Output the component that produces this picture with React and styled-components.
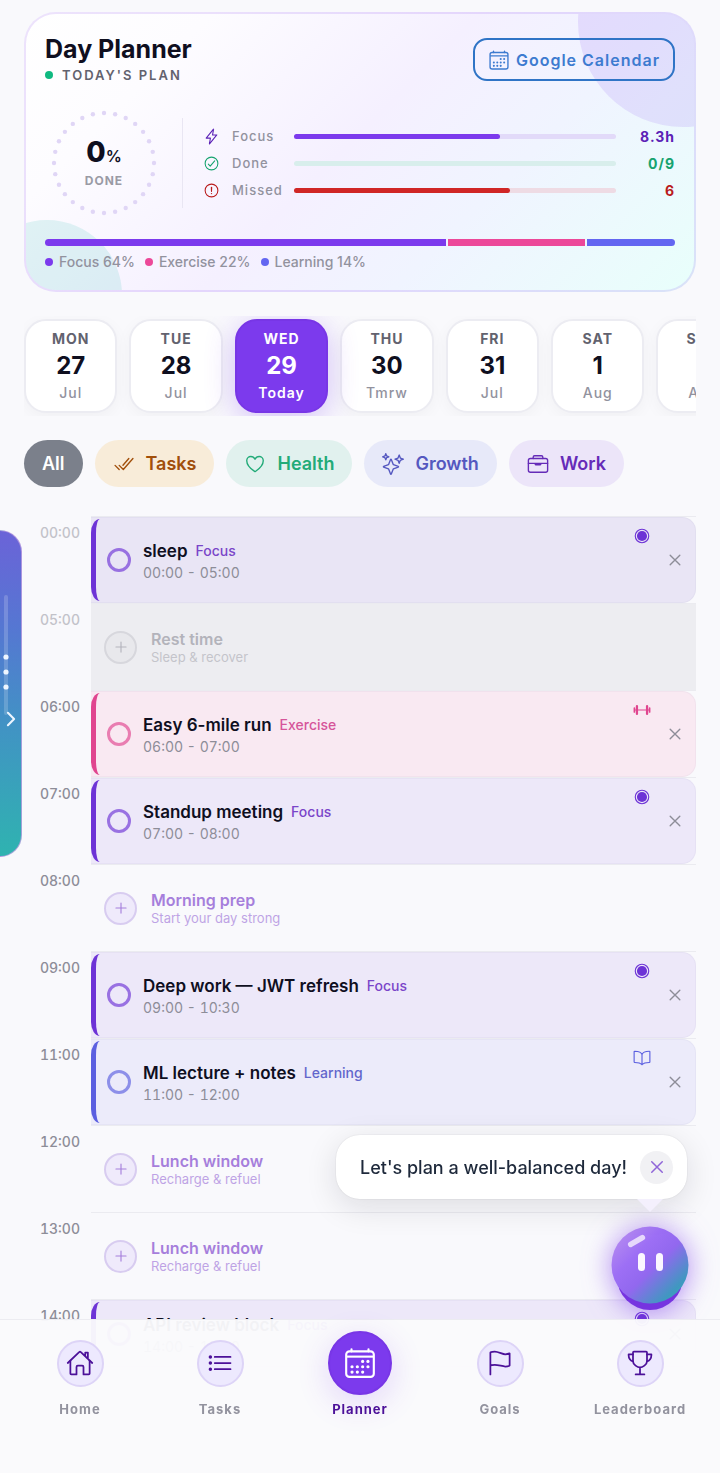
import React, { useState } from "react";
import styled, { createGlobalStyle, css } from "styled-components";
import {
  IoAddOutline,
  IoAlertCircleOutline,
  IoBarbellOutline,
  IoBookOutline,
  IoBriefcaseOutline,
  IoCalendarOutline,
  IoCheckmarkCircleOutline,
  IoCheckmarkDoneOutline,
  IoChevronForward,
  IoCloseOutline,
  IoFlagOutline,
  IoFlashOutline,
  IoHeartOutline,
  IoHomeOutline,
  IoListOutline,
  IoRadioButtonOn,
  IoSparklesOutline,
  IoTrophyOutline,
} from "react-icons/io5";

const GlobalStyle = createGlobalStyle`
  * {
    box-sizing: border-box;
  }
  body {
    margin: 0;
    background: #f9f9fc;
    color: #0f0f1f;
    font-family: Inter, "Liberation Sans", sans-serif;
  }
  button {
    font-family: inherit;
    cursor: pointer;
  }
`;

const Page = styled.main`
  padding: 12px 24px 80px;
`;

/* ---------- summary card ---------- */

const Summary = styled.section`
  position: relative;
  overflow: hidden;
  height: 280px;
  padding: 19px;
  border: 2px solid rgba(124, 58, 237, 0.14);
  border-radius: 32px;
  background: linear-gradient(135deg, #ffffff 0%, #fdfcff 20%, #f5f0ff 48%, #f0f4ff 68%, #e8fffb 100%) border-box;
`;

const Blob = styled.span`
  position: absolute;
  border-radius: 50%;
`;

const PurpleBlob = styled(Blob)`
  top: -97px;
  right: -94px;
  width: 210px;
  height: 210px;
  background: rgba(124, 58, 237, 0.12);
`;

const TealBlob = styled(Blob)`
  left: -54px;
  bottom: -80px;
  width: 150px;
  height: 150px;
  background: rgba(20, 184, 166, 0.12);
`;

const SummaryBody = styled.div`
  position: relative;
`;

const SummaryHeader = styled.header`
  display: flex;
  justify-content: space-between;
  align-items: flex-start;
  height: 71px;
  padding-top: 5px;
`;

const Title = styled.h1`
  margin: 0;
  font-size: 25px;
  line-height: 22px;
  font-weight: 700;
`;

const Subtitle = styled.p`
  display: flex;
  align-items: center;
  gap: 9px;
  margin: 7px 0 0;
  font-size: 13px;
  line-height: 16px;
  font-weight: 600;
  letter-spacing: 2px;
  color: #62626e;
`;

const Dot = styled.span`
  width: 8px;
  height: 8px;
  border-radius: 50%;
  background: ${({ $color }) => $color};
`;

const GoogleButton = styled.button`
  display: flex;
  align-items: center;
  gap: 6px;
  height: 43px;
  padding: 0 13px;
  border: 2px solid #2f74c6;
  border-radius: 14px;
  background: transparent;
  color: #3d7bd0;
  font-size: 16px;
  font-weight: 600;
  letter-spacing: 1px;
`;

const Stats = styled.div`
  display: flex;
  align-items: center;
  height: 118px;
`;

const Ring = styled.div`
  display: grid;
  place-items: center;
  width: 118px;
  height: 118px;

  > * {
    grid-area: 1 / 1;
  }
`;

const RingText = styled.div`
  text-align: center;
`;

const RingValue = styled.div`
  font-size: 28px;
  line-height: 32px;
  font-weight: 800;

  small {
    font-size: 16px;
    font-weight: 600;
  }
`;

const RingLabel = styled.div`
  font-size: 12px;
  line-height: 18px;
  font-weight: 700;
  letter-spacing: 1px;
  color: #9a9aa5;
`;

const StatList = styled.div`
  flex: 1;
  display: grid;
  gap: 7px;
  margin-left: 19px;
  padding: 8px 0 8px 20px;
  border-left: 1px solid #e9e6f3;
`;

const StatRow = styled.div`
  display: grid;
  grid-template-columns: 17px 50px 1fr 47px;
  column-gap: 12px;
  align-items: center;
  height: 20px;
  font-size: 14px;
  color: ${({ $color }) => $color};

  svg {
    width: 17px;
    height: 17px;
  }
`;

const StatLabel = styled.span`
  font-size: 13px;
  font-weight: 500;
  letter-spacing: 1px;
  color: #92929e;
`;

const StatValue = styled.strong`
  text-align: right;
  font-weight: 700;
  letter-spacing: 1px;
`;

const Track = styled.div`
  height: 5px;
  border-radius: 3px;
  background: ${({ $color }) => $color};
`;

const Fill = styled.div`
  height: 5px;
  border-radius: 3px;
  background: ${({ $color }) => $color};
`;

const SplitBar = styled.div`
  display: flex;
  gap: 2px;
  overflow: hidden;
  height: 7px;
  margin-top: 17px;
  border-radius: 4px;
`;

const SplitPart = styled.span`
  flex: ${({ $share }) => $share};
  background: ${({ $color }) => $color};
`;

const Legend = styled.ul`
  display: flex;
  gap: 10px;
  margin: 8px 0 0;
  padding: 0;
  list-style: none;
`;

const LegendItem = styled.li`
  display: flex;
  align-items: center;
  gap: 6px;
  font-size: 14px;
  line-height: 16px;
  font-weight: 500;
  color: #92929e;
`;

/* ---------- day strip ---------- */

const DayStrip = styled.div`
  display: flex;
  gap: 12px;
  overflow: hidden;
  margin-top: 24px;
  padding: 3px 0;
`;

const Day = styled.button`
  flex: 0 0 13.9%;
  height: 94px;
  padding: 0;
  border: 2px solid #ececf2;
  border-radius: 22px;
  background: #ffffff;
  box-shadow: 0 4px 16px rgba(15, 15, 31, 0.04);
  color: #0f0f1f;

  span {
    display: block;
    font-size: 14px;
    line-height: 24px;
    letter-spacing: 1px;
    font-weight: 500;
    color: #92929e;
  }
  span:first-child {
    font-weight: 700;
    color: #62626e;
  }
  strong {
    display: block;
    font-size: 24px;
    line-height: 30px;
    font-weight: 700;
  }

  ${({ $active }) =>
    $active &&
    css`
      position: relative;
      border-color: #7836e6;
      background: #7c3aed;
      box-shadow: 0 6px 30px rgba(124, 58, 237, 0.3);
      color: #ffffff;

      span,
      span:first-child {
        color: #ffffff;
      }
      span:last-child {
        font-weight: 600;
      }
    `}
`;

/* ---------- filters ---------- */

const Filters = styled.div`
  display: flex;
  gap: 12px;
  margin-top: 24px;
`;

const Filter = styled.button`
  display: flex;
  align-items: center;
  gap: 11px;
  height: 47px;
  padding: 0 18px;
  border: 0;
  border-radius: 24px;
  background: ${({ $bg }) => $bg};
  color: ${({ $color }) => $color};
  font-size: 18px;
  font-weight: 600;

  svg {
    width: 22px;
    height: 22px;
  }
`;

/* ---------- timeline ---------- */

const Timeline = styled.section`
  margin-top: 29px;
`;

const Row = styled.div`
  display: grid;
  grid-template-columns: 67px 1fr;
  height: ${({ $short }) => ($short ? "68px" : "87px")};
`;

const Hour = styled.time`
  padding: 9px 11px 0 0;
  text-align: right;
  font-size: 14px;
  line-height: 16px;
  font-weight: 500;
  font-variant-numeric: tabular-nums;
  color: #8d8d98;
  opacity: ${({ $faded }) => ($faded ? 0.5 : 1)};
`;

const Slot = styled.div`
  border-top: 1px solid #ebebf0;
`;

const Task = styled.article`
  position: relative;
  display: flex;
  align-items: center;
  height: 100%;
  padding-left: 16px;
  border: 1px solid rgba(80, 70, 130, 0.04);
  border-left: 0;
  border-radius: 0 14px 14px 0;
  background: ${({ $bg }) => $bg};

  &::before {
    content: "";
    position: absolute;
    top: 1px;
    bottom: 1px;
    left: 0;
    width: 9px;
    border-left: 5px solid ${({ $color }) => $color};
    border-radius: 9px 0 0 9px / 14px 0 0 14px;
  }
`;

const Check = styled.input`
  appearance: none;
  width: 24px;
  height: 24px;
  margin: 0 12px 0 0;
  border: 3px solid ${({ $color }) => $color};
  border-radius: 50%;
  opacity: 0.66;
`;

const SlotText = styled.div`
  padding-top: 2px;
`;

const TaskName = styled.label`
  display: flex;
  align-items: center;
  gap: 8px;
  font-size: 17px;
  line-height: 24px;
  font-weight: 600;
`;

const Tag = styled.span`
  font-size: 14px;
  font-weight: 500;
  color: ${({ $color }) => $color};
`;

const TaskTime = styled.div`
  font-size: 14px;
  line-height: 20px;
  font-variant-numeric: tabular-nums;
  color: #8d8d98;
`;

const TaskIcon = styled.span`
  position: absolute;
  top: 9px;
  right: 44px;
  display: flex;
  color: ${({ $color }) => $color};
  font-size: 18px;
`;

const RemoveButton = styled.button`
  display: flex;
  margin-left: auto;
  margin-right: 9px;
  padding: 0;
  border: 0;
  background: none;
  color: #8d8d98;
  font-size: 22px;
`;

const Empty = styled.div`
  display: flex;
  align-items: center;
  gap: 14px;
  height: 100%;
  padding-left: 13px;
  background: ${({ $rest }) => ($rest ? "#ededf1" : "transparent")};
  color: ${({ $rest }) => ($rest ? "#8d8d98" : "#7434c9")};

  > * {
    opacity: ${({ $rest }) => ($rest ? 0.6 : 0.62)};
  }
`;

const AddButton = styled.button`
  display: grid;
  place-items: center;
  width: 33px;
  height: 33px;
  padding: 0;
  border: 2px solid ${({ $rest }) => ($rest ? "#c9c9d0" : "#c5b2ea")};
  border-radius: 50%;
  background: ${({ $rest }) => ($rest ? "#e6e6ea" : "#e9e1fb")};
  color: inherit;
  font-size: 18px;
`;

const EmptyTitle = styled.div`
  font-size: 16px;
  line-height: 18px;
  font-weight: 600;
`;

const EmptyHint = styled.div`
  font-size: 13px;
  line-height: 18px;
  opacity: 0.7;
`;

/* ---------- floating parts ---------- */

const DrawerHandle = styled.button`
  position: fixed;
  left: 0;
  top: 530px;
  display: grid;
  width: 22px;
  height: 327px;
  padding: 0;
  border: 1px solid rgba(190, 160, 225, 0.8);
  border-left: 0;
  border-radius: 0 24px 24px 0;
  background: linear-gradient(180deg, #6b63d8 0%, #5577d2 30%, #4193c4 60%, #2fb3b0 100%);
`;

const Bubble = styled.aside`
  position: fixed;
  right: 33px;
  bottom: 274px;
  display: flex;
  align-items: center;
  gap: 13px;
  height: 64px;
  padding: 0 14px 0 24px;
  border-radius: 24px;
  background: #ffffff;
  box-shadow: 0 8px 32px rgba(15, 15, 31, 0.12), 0 0 2px rgba(15, 15, 31, 0.12);
  color: #1e293b;
  font-size: 18px;
  font-weight: 500;

  &::after {
    content: "";
    position: absolute;
    right: 24px;
    top: 100%;
    border: 13px solid transparent;
    border-top-color: #f4f0fd;
    border-bottom: 0;
  }
`;

const BubbleClose = styled.button`
  display: grid;
  place-items: center;
  width: 33px;
  height: 33px;
  padding: 0;
  border: 0;
  border-radius: 50%;
  background: #f1f1f4;
  color: #9066d8;
  font-size: 24px;
`;

const Mascot = styled.button`
  position: fixed;
  right: 31px;
  bottom: 163px;
  display: flex;
  padding: 0;
  border: 0;
  background: none;

  svg {
    overflow: visible;
    filter: drop-shadow(0 2px 14px rgba(124, 58, 237, 0.6));
  }
`;

/* ---------- bottom nav ---------- */

const Nav = styled.nav`
  position: fixed;
  left: 0;
  right: 0;
  bottom: 0;
  display: grid;
  grid-template-columns: repeat(5, 1fr);
  height: 154px;
  padding: 11px 10px;
  border-top: 1px solid #ececf1;
  background: rgba(250, 250, 252, 0.97);
`;

const NavItem = styled.a`
  display: flex;
  flex-direction: column;
  align-items: center;
  gap: 5px;
  color: ${({ $active }) => ($active ? "#4c1199" : "#92929e")};
  font-size: 13px;
  line-height: 18px;
  font-weight: 700;
  letter-spacing: 1px;
  text-decoration: none;
`;

const NavSlot = styled.span`
  display: grid;
  place-items: center;
  height: 64px;
`;

const NavIcon = styled.span`
  display: grid;
  place-items: center;
  width: 47px;
  height: 47px;
  border: 2px solid #ddd4f7;
  border-radius: 50%;
  background: #ede9fe;
  color: #4c1199;
  font-size: 28px;

  ${({ $active }) =>
    $active &&
    css`
      width: 64px;
      height: 64px;
      border-color: #7836e6;
      background: #7c3aed;
      box-shadow: 0 8px 32px rgba(124, 58, 237, 0.2);
      color: #ffffff;
      font-size: 34px;
    `}
`;

const PURPLE = "#7c3aed";
const PINK = "#ec4899";
const BLUE = "#6366f1";

const stats = [
  { label: "Focus", value: "8.3h", percent: 64, color: "#5b21b6", bar: PURPLE, track: "#e2daf9", Icon: IoFlashOutline },
  { label: "Done", value: "0/9", percent: 0, color: "#16a36f", bar: "#10b981", track: "#d8eeec", Icon: IoCheckmarkCircleOutline },
  { label: "Missed", value: "6", percent: 67, color: "#b91c1c", bar: "#d02626", track: "#eedbe4", Icon: IoAlertCircleOutline },
];

const split = [
  { label: "Focus", share: 64, color: PURPLE },
  { label: "Exercise", share: 22, color: PINK },
  { label: "Learning", share: 14, color: BLUE },
];

const days = [
  { name: "MON", date: 27, note: "Jul" },
  { name: "TUE", date: 28, note: "Jul" },
  { name: "WED", date: 29, note: "Today" },
  { name: "THU", date: 30, note: "Tmrw" },
  { name: "FRI", date: 31, note: "Jul" },
  { name: "SAT", date: 1, note: "Aug" },
  { name: "SUN", date: 2, note: "Aug" },
];

const filters = [
  { label: "All", bg: "#7b808b", color: "#ffffff" },
  { label: "Tasks", bg: "#f8ecd9", color: "#a14f0b", Icon: IoCheckmarkDoneOutline },
  { label: "Health", bg: "#e1f1ee", color: "#22ab78", Icon: IoHeartOutline },
  { label: "Growth", bg: "#e7e9f9", color: "#5558c0", Icon: IoSparklesOutline },
  { label: "Work", bg: "#ece5f9", color: "#652bb8", Icon: IoBriefcaseOutline },
];

const kinds = {
  Focus: { color: "#6d33d6", tag: "#7a45c9", bg: "#ede8f9", Icon: IoRadioButtonOn },
  Exercise: { color: "#e0458f", tag: "#d6559a", bg: "#f9e9f2", Icon: IoBarbellOutline },
  Learning: { color: "#5b5fe0", tag: "#6266cc", bg: "#ecebfa", Icon: IoBookOutline },
};

const slots = [
  { hour: "00:00", title: "sleep", kind: "Focus", time: "00:00 - 05:00", faded: true },
  { hour: "05:00", title: "Rest time", hint: "Sleep & recover", rest: true, faded: true },
  { hour: "06:00", title: "Easy 6-mile run", kind: "Exercise", time: "06:00 - 07:00" },
  { hour: "07:00", title: "Standup meeting", kind: "Focus", time: "07:00 - 08:00" },
  { hour: "08:00", title: "Morning prep", hint: "Start your day strong" },
  { hour: "09:00", title: "Deep work — JWT refresh", kind: "Focus", time: "09:00 - 10:30" },
  { hour: "11:00", title: "ML lecture + notes", kind: "Learning", time: "11:00 - 12:00" },
  { hour: "12:00", title: "Lunch window", hint: "Recharge & refuel" },
  { hour: "13:00", title: "Lunch window", hint: "Recharge & refuel" },
  { hour: "14:00", title: "API review block", kind: "Focus", time: "14:00 - 15:30", short: true },
];

const links = [
  { label: "Home", Icon: IoHomeOutline },
  { label: "Tasks", Icon: IoListOutline },
  { label: "Planner", Icon: IoCalendarOutline },
  { label: "Goals", Icon: IoFlagOutline },
  { label: "Leaderboard", Icon: IoTrophyOutline },
];

const ringDots = Array.from({ length: 28 }, (_, i) => (i * 2 * Math.PI) / 28);

function DayRing() {
  return (
    <Ring>
      <svg width="118" height="118" viewBox="0 0 118 118" aria-hidden="true">
        {ringDots.map((angle) => (
          <circle
            key={angle}
            cx={59 + 50 * Math.cos(angle)}
            cy={59 + 50 * Math.sin(angle)}
            r="2.2"
            fill="#e0d6f6"
          />
        ))}
      </svg>
      <RingText>
        <RingValue>
          0<small>%</small>
        </RingValue>
        <RingLabel>DONE</RingLabel>
      </RingText>
    </Ring>
  );
}

function TaskSlot({ slot }) {
  const { color, tag, bg, Icon } = kinds[slot.kind];
  const id = `task-${slot.hour}`;
  return (
    <Task $color={color} $bg={slot.faded ? "#e9e5f5" : bg}>
      <Check type="checkbox" id={id} $color={color} />
      <SlotText>
        <TaskName htmlFor={id}>
          {slot.title} <Tag $color={tag}>{slot.kind}</Tag>
        </TaskName>
        <TaskTime>{slot.time}</TaskTime>
      </SlotText>
      <TaskIcon $color={color}>
        <Icon />
      </TaskIcon>
      <RemoveButton aria-label={`Remove ${slot.title}`}>
        <IoCloseOutline />
      </RemoveButton>
    </Task>
  );
}

function EmptySlot({ slot }) {
  return (
    <Empty $rest={slot.rest}>
      <AddButton $rest={slot.rest} aria-label={`Add at ${slot.hour}`}>
        <IoAddOutline />
      </AddButton>
      <SlotText>
        <EmptyTitle>{slot.title}</EmptyTitle>
        <EmptyHint>{slot.hint}</EmptyHint>
      </SlotText>
    </Empty>
  );
}

function MascotFace() {
  return (
    <svg width="78" height="84" viewBox="0 0 78 84" aria-hidden="true">
      <defs>
        <linearGradient id="face" x1="0.1" y1="0.1" x2="0.9" y2="0.9">
          <stop offset="0" stopColor="#b48af0" />
          <stop offset="0.3" stopColor="#9d6ff5" />
          <stop offset="0.55" stopColor="#9268ef" />
          <stop offset="0.9" stopColor="#3f98c0" />
          <stop offset="1" stopColor="#38a8b8" />
        </linearGradient>
      </defs>
      <circle cx="39" cy="51" r="33" fill="#7634e0" />
      <circle cx="39" cy="39" r="38.5" fill="url(#face)" />
      <rect x="16" y="12.5" width="19" height="5.5" rx="2.75" fill="#e6d8fb" transform="rotate(-30 25 15)" />
      <rect x="27" y="27" width="7" height="18" rx="3.5" fill="#fbf7ff" />
      <rect x="45" y="27" width="7" height="18" rx="3.5" fill="#fbf7ff" />
    </svg>
  );
}

function App() {
  const [day, setDay] = useState("WED");
  const [showTip, setShowTip] = useState(true);

  return (
    <>
      <GlobalStyle />
      <Page>
        <Summary>
          <PurpleBlob />
          <TealBlob />
          <SummaryBody>
            <SummaryHeader>
              <div>
                <Title>Day Planner</Title>
                <Subtitle>
                  <Dot $color="#10b981" />
                  TODAY'S PLAN
                </Subtitle>
              </div>
              <GoogleButton>
                <IoCalendarOutline size={22} />
                Google Calendar
              </GoogleButton>
            </SummaryHeader>
            <Stats>
              <DayRing />
              <StatList>
                {stats.map(({ label, value, percent, color, bar, track, Icon }) => (
                  <StatRow key={label} $color={color}>
                    <Icon />
                    <StatLabel>{label}</StatLabel>
                    <Track $color={track}>
                      <Fill $color={bar} style={{ width: `${percent}%` }} />
                    </Track>
                    <StatValue>{value}</StatValue>
                  </StatRow>
                ))}
              </StatList>
            </Stats>
            <SplitBar>
              {split.map(({ label, share, color }) => (
                <SplitPart key={label} $share={share} $color={color} />
              ))}
            </SplitBar>
            <Legend>
              {split.map(({ label, share, color }) => (
                <LegendItem key={label}>
                  <Dot $color={color} />
                  {label} {share}%
                </LegendItem>
              ))}
            </Legend>
          </SummaryBody>
        </Summary>

        <DayStrip>
          {days.map(({ name, date, note }) => (
            <Day key={name} $active={name === day} onClick={() => setDay(name)}>
              <span>{name}</span>
              <strong>{date}</strong>
              <span>{note}</span>
            </Day>
          ))}
        </DayStrip>

        <Filters>
          {filters.map(({ label, bg, color, Icon }) => (
            <Filter key={label} $bg={bg} $color={color}>
              {Icon && <Icon />}
              {label}
            </Filter>
          ))}
        </Filters>

        <Timeline>
          {slots.map((slot) => (
            <Row key={slot.hour} $short={slot.short}>
              <Hour $faded={slot.faded}>{slot.hour}</Hour>
              <Slot>{slot.kind ? <TaskSlot slot={slot} /> : <EmptySlot slot={slot} />}</Slot>
            </Row>
          ))}
        </Timeline>
      </Page>

      <DrawerHandle aria-label="Open drawer">
        <svg width="21" height="325" viewBox="0 0 21 325" aria-hidden="true">
          <rect x="4" y="64" width="4" height="120" rx="2" fill="#fff" opacity="0.18" />
          <circle cx="6" cy="126" r="2.6" fill="#eef6ff" />
          <circle cx="6" cy="141" r="2.6" fill="#eef6ff" />
          <circle cx="6" cy="156" r="2.6" fill="#eef6ff" />
          <IoChevronForward x="0" y="177" size={22} color="#eef6ff" />
        </svg>
      </DrawerHandle>

      <Mascot aria-label="Assistant">
        <MascotFace />
      </Mascot>
      {showTip && (
        <Bubble>
          Let's plan a well-balanced day!
          <BubbleClose aria-label="Close" onClick={() => setShowTip(false)}>
            <IoCloseOutline />
          </BubbleClose>
        </Bubble>
      )}

      <Nav>
        {links.map(({ label, Icon }) => (
          <NavItem key={label} href={`#${label.toLowerCase()}`} $active={label === "Planner"}>
            <NavSlot>
              <NavIcon $active={label === "Planner"}>
                <Icon />
              </NavIcon>
            </NavSlot>
            {label}
          </NavItem>
        ))}
      </Nav>
    </>
  );
}

export default App;
